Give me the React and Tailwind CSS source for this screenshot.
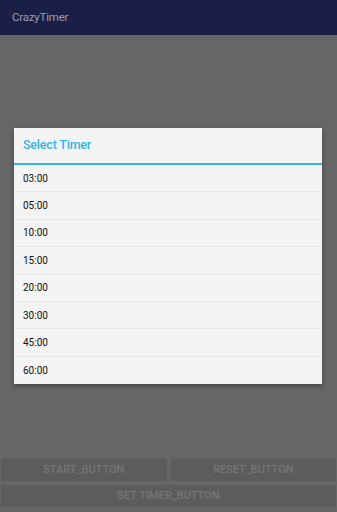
// CrazyTimer — "Select Timer" dialog over dimmed main screen

const TIMES = ['03:00', '05:00', '10:00', '15:00', '20:00', '30:00', '45:00', '60:00'];

export default function App() {
  return (
    <div
      className="relative w-[337px] h-[512px] overflow-hidden bg-[#666666] flex flex-col"
      style={{ fontFamily: 'Roboto, "Noto Sans", sans-serif' }}
    >
      {/* App bar (dimmed) */}
      <div className="h-[35px] bg-[#1a1f48] flex items-center px-[12px] shrink-0">
        <span className="text-[11.5px] text-[#9a9cab] tracking-[-0.2px]">CrazyTimer</span>
      </div>

      {/* Screen body, dimmed */}
      <div className="flex-1" />
      <div className="flex flex-col gap-[4px] px-[1px] pb-[5px]">
        <div className="flex gap-[4px]">
          <div className="flex-1 h-[22px] bg-[#5c5c5c] flex items-center justify-center text-[11px] font-medium text-[#767676]">
            START_BUTTON
          </div>
          <div className="flex-1 h-[22px] bg-[#5c5c5c] flex items-center justify-center text-[11px] font-medium text-[#767676]">
            RESET_BUTTON
          </div>
        </div>
        <div className="h-[22px] bg-[#5c5c5c] flex items-center justify-center text-[11px] font-medium text-[#767676]">
          SET TIMER_BUTTON
        </div>
      </div>

      {/* Dialog */}
      <div className="absolute left-[14px] top-[128px] w-[308px] bg-[#f4f4f4] shadow-[0_2px_4px_rgba(0,0,0,0.35)]">
        <div className="h-[37px] flex items-center px-[9px] border-b-2 border-[#33b5e5]">
          <span className="text-[12.5px] font-medium text-[#33b5e5] tracking-[-0.2px]">Select Timer</span>
        </div>
        {TIMES.map((t, i) => (
          <div
            key={t}
            className={`h-[27.4px] flex items-center px-[9px] text-[10px] text-[#111111] ${
              i < TIMES.length - 1 ? 'border-b border-[#e6e6e6]' : ''
            }`}
          >
            {t}
          </div>
        ))}
      </div>
    </div>
  );
}
